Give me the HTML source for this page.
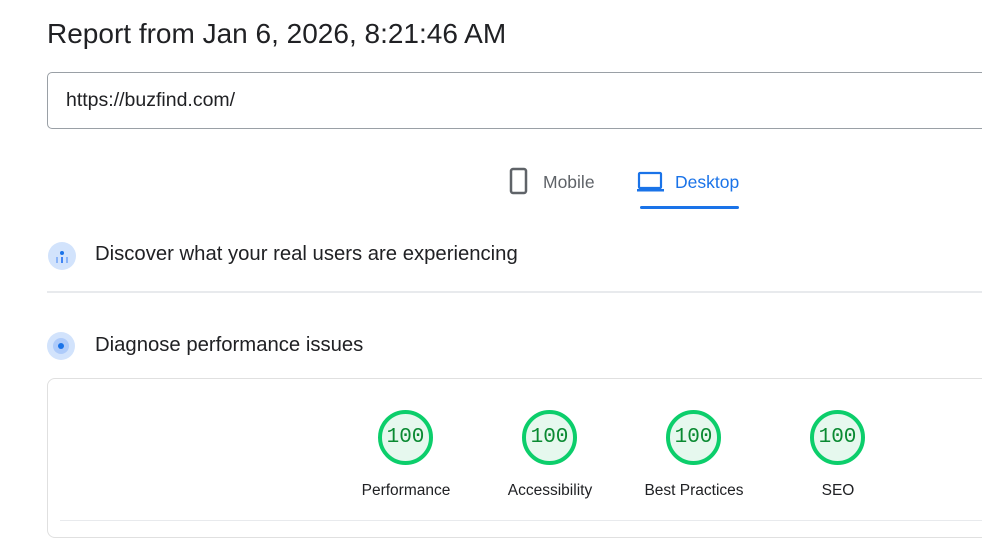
<!DOCTYPE html>
<html><head><style>
body{margin:0;width:982px;height:522px;overflow:hidden;background:#fff;font-family:"Liberation Sans",sans-serif;position:relative;color:#202124}
.a{position:absolute}
h1{position:absolute;left:47px;top:18px;margin:0;font-size:28px;font-weight:400;color:#202124}
.url{left:47px;top:72px;width:960px;height:57px;border:1px solid #9aa0a6;border-radius:5px;box-sizing:border-box}
.url span{position:absolute;left:18px;top:16px;font-size:19.5px;color:#202124}
.t{font-size:17.5px}
.sec{font-size:20.3px;left:95px}
.g{width:55px;height:55px;border-radius:50%;border:4px solid #0cce6b;background:#e6f8ee;box-sizing:border-box;font-family:"Liberation Mono",monospace;font-size:21px;color:#0a8a32;text-align:center;line-height:47px}
.l{font-size:15.5px;color:#202124;width:160px;text-align:center}
</style></head><body>
<h1>Report from Jan 6, 2026, 8:21:46 AM</h1>
<div class="a url"><span>https://buzfind.com/</span></div>
<svg class="a" style="left:509px;top:167px" width="20" height="28"><rect x="2" y="2" width="15" height="24" rx="2" fill="none" stroke="#5f6368" stroke-width="2.5"/></svg>
<div class="a t" style="left:543px;top:172px;color:#5f6368">Mobile</div>
<svg class="a" style="left:636px;top:170px" width="30" height="24"><rect x="3" y="3" width="22" height="15" rx="1" fill="none" stroke="#1a73e8" stroke-width="2.2"/><rect x="1" y="19" width="27" height="2.5" fill="#1a73e8"/></svg>
<div class="a t" style="left:675px;top:172px;color:#1a73e8">Desktop</div>
<div class="a" style="left:640px;top:206px;width:99px;height:3px;background:#1a73e8;border-radius:2px"></div>
<svg class="a" style="left:47px;top:241px" width="30" height="30"><circle cx="15" cy="15" r="14" fill="#d2e3fc"/><circle cx="15" cy="12" r="2" fill="#1a73e8"/><rect x="9" y="16" width="2" height="6" fill="#8ab4f8"/><rect x="14" y="16" width="2" height="6" fill="#4285f4"/><rect x="19" y="16" width="2" height="6" fill="#8ab4f8"/></svg>
<div class="a sec" style="top:243px">Discover what your real users are experiencing</div>
<div class="a" style="left:47px;top:291px;width:940px;height:2px;background:#e8eaed"></div>
<svg class="a" style="left:46px;top:331px" width="30" height="30"><circle cx="15" cy="15" r="14" fill="#d2e3fc"/><circle cx="15" cy="15" r="8" fill="#aecbfa"/><circle cx="15" cy="15" r="3" fill="#1a73e8"/></svg>
<div class="a sec" style="top:334px">Diagnose performance issues</div>
<div class="a" style="left:47px;top:378px;width:960px;height:160px;border:1px solid #e0e0e0;border-radius:8px;box-sizing:border-box"></div>
<div class="a g" style="left:378px;top:410px">100</div>
<div class="a g" style="left:522px;top:410px">100</div>
<div class="a g" style="left:666px;top:410px">100</div>
<div class="a g" style="left:810px;top:410px">100</div>
<div class="a l" style="left:326px;top:482px">Performance</div>
<div class="a l" style="left:470px;top:482px">Accessibility</div>
<div class="a l" style="left:614px;top:482px">Best Practices</div>
<div class="a l" style="left:758px;top:482px">SEO</div>
<div class="a" style="left:60px;top:520px;width:930px;height:1px;background:#e8eaed"></div>
</body></html>
